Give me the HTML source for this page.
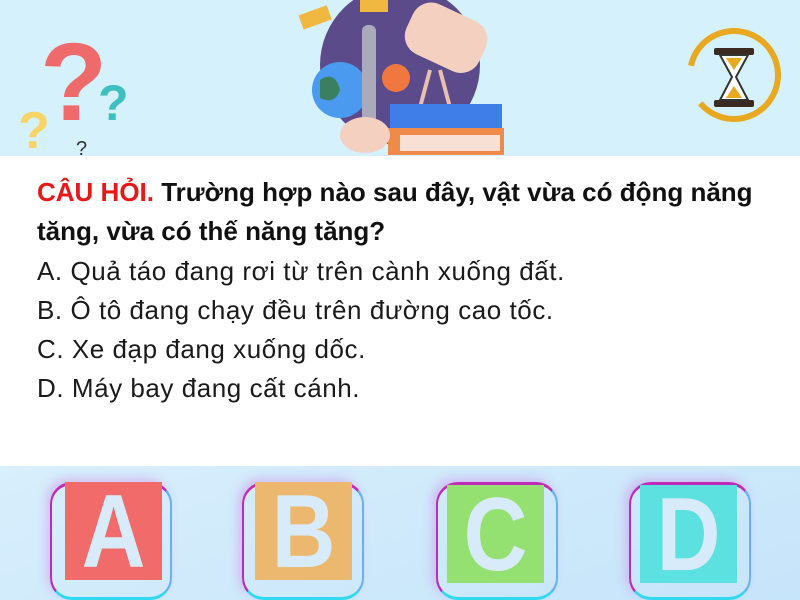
<!DOCTYPE html>
<html><head><meta charset="utf-8"><style>
body{margin:0;width:800px;height:600px;overflow:hidden;background:#fff;position:relative;font-family:"Liberation Sans",sans-serif}
.top{position:absolute;left:0;top:0;width:800px;height:156px;background:#d5f1fb}
.bot{position:absolute;left:0;top:466px;width:800px;height:134px;background:linear-gradient(160deg,#d8effc,#c6e4fa)}
.t{position:absolute;left:37px;white-space:nowrap;color:#111}
.q{font-weight:bold;font-size:26px}
.a{font-size:26px;letter-spacing:0.55px;color:#1a1a1a}
.box{position:absolute;top:482px;width:97px;height:98px;overflow:hidden}
.box span{display:block;color:#d8ebfa;font-weight:bold;font-size:104px;text-align:center;line-height:100px;transform:scaleX(0.85)}
.fr{position:absolute;top:482px;width:118px;height:112px;border-radius:22px;border-left:2px solid #c02ab8;border-top:3px solid #c02ab8;border-right:2px solid #6ab0f0;border-bottom:3px solid #30d8f0;box-shadow:-4px -4px 10px rgba(200,60,220,.25)}
</style></head><body>
<div class="top"></div>
<svg style="position:absolute;left:0;top:0" width="800" height="156">
<text x="40" y="120" font-size="110" font-weight="bold" fill="#ef6b6b" font-family="Liberation Sans">?</text>
<text x="98" y="120" font-size="50" font-weight="bold" fill="#3fbfbf" font-family="Liberation Sans">?</text>
<text x="18" y="148" font-size="52" font-weight="bold" fill="#f8d468" font-family="Liberation Sans">?</text>
<text x="76" y="155" font-size="20" fill="#333" font-family="Liberation Sans">?</text>
<circle cx="400" cy="65" r="80" fill="#5b4b8a"/>
<circle cx="340" cy="90" r="28" fill="#4a9af0"/>
<path d="M320 80q15 -10 20 10q-5 15 -20 8z" fill="#3a8060"/>
<rect x="362" y="25" width="14" height="105" rx="6" fill="#aab"/>
<circle cx="396" cy="78" r="14" fill="#f07840"/>
<rect x="405" y="10" width="80" height="55" rx="20" fill="#f4d0c0" transform="rotate(25 445 40)"/>
<path d="M430 70 l-12 45 M440 70 l12 45" stroke="#e8c0b0" stroke-width="4"/>
<rect x="390" y="104" width="112" height="26" fill="#3f7ee8"/>
<rect x="388" y="128" width="116" height="27" fill="#f08a48"/>
<rect x="400" y="135" width="100" height="16" fill="#f8e0d4"/>
<ellipse cx="365" cy="135" rx="25" ry="18" fill="#f4d0c0"/>
<rect x="300" y="10" width="30" height="15" fill="#f0b840" transform="rotate(-20 315 17)"/>
<rect x="360" y="0" width="28" height="12" fill="#f0b840"/>
<circle cx="734" cy="75" r="44" fill="none" stroke="#e8a820" stroke-width="6" stroke-dasharray="230 40" transform="rotate(200 734 75)"/>
<rect x="714" y="48" width="40" height="7" rx="2" fill="#3a2a20"/>
<rect x="714" y="100" width="40" height="7" rx="2" fill="#3a2a20"/>
<path d="M720 55h28l-12 22l12 23h-28l12 -23z" fill="#fff" stroke="#333" stroke-width="2"/>
<path d="M726 58h16l-8 12z M726 98h16l-8 -12z" fill="#e8a820"/>
</svg>
<div class="t q" style="top:177px"><span style="color:#e81818">CÂU HỎI.</span> Trường hợp nào sau đây, vật vừa có động năng</div>
<div class="t q" style="top:216px">tăng, vừa có thế năng tăng?</div>
<div class="t a" style="top:256px">A. Quả táo đang rơi từ trên cành xuống đất.</div>
<div class="t a" style="top:295px">B. Ô tô đang chạy đều trên đường cao tốc.</div>
<div class="t a" style="top:334px">C. Xe đạp đang xuống dốc.</div>
<div class="t a" style="top:373px">D. Máy bay đang cất cánh.</div>
<div class="bot"></div>
<div class="fr" style="left:50px"></div>
<div class="fr" style="left:242px"></div>
<div class="fr" style="left:436px"></div>
<div class="fr" style="left:629px"></div>
<div class="box" style="left:65px;background:#f26b6b"><span>A</span></div>
<div class="box" style="left:255px;background:#ecb870"><span>B</span></div>
<div class="box" style="left:447px;top:485px;background:#94e070"><span>C</span></div>
<div class="box" style="left:640px;top:485px;background:#5ce0e0"><span>D</span></div>
</body></html>
